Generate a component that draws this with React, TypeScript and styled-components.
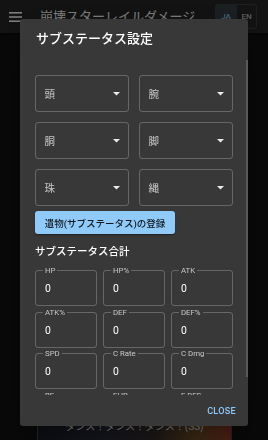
import React from "react";
import styled, { createGlobalStyle } from "styled-components";

const GlobalStyle = createGlobalStyle`
  html, body { margin: 0; padding: 0; background: #121212; }
  body {
    font-family: Roboto, "Noto Sans CJK JP", sans-serif;
    color: #fff;
    overflow: hidden;
  }
  * { box-sizing: border-box; }
`;

const Page = styled.div`
  width: 268px;
  height: 440px;
  overflow: hidden;
`;

const AppBar = styled.header`
  height: 33px;
  background: #272727;
  display: flex;
  align-items: center;
  padding: 0 11px 0 9px;
  box-shadow: 0 2px 4px rgba(0, 0, 0, 0.4);
`;

const MenuIcon = styled.svg`
  width: 13px;
  height: 10px;
  flex: none;
`;

const AppTitle = styled.div`
  flex: 1;
  margin-left: 18px;
  font-size: 13px;
  line-height: 20px;
  color: #fff;
  white-space: nowrap;
`;

const Toggle = styled.div`
  display: flex;
  height: 25px;
  border: 1px solid rgba(255, 255, 255, 0.12);
  border-radius: 3px;
  overflow: hidden;
`;

const ToggleBtn = styled.div<{ $selected?: boolean }>`
  width: 20px;
  display: flex;
  align-items: center;
  justify-content: center;
  font-size: 8px;
  font-weight: 500;
  color: ${(p) => (p.$selected ? "#90caf9" : "rgba(255,255,255,0.7)")};
  background: ${(p) => (p.$selected ? "rgba(144,202,249,0.16)" : "transparent")};
  & + & { border-left: 1px solid rgba(255, 255, 255, 0.12); }
`;

const Main = styled.main`
  padding: 0 36px 0 37px;
`;

const Card = styled.div`
  margin-top: 372px;
  height: 120px;
  border: 1px solid #4a4a4a;
  background: linear-gradient(90deg, #1b1e2a 0%, #2b2d3a 35%, #3a3030 60%, #7a5526 82%, #a0402a 100%);
  display: flex;
  justify-content: center;
  padding-top: 14px;
`;

const CardCaption = styled.div`
  font-size: 10px;
  line-height: 14px;
  color: #fff;
`;

const Backdrop = styled.div`
  position: fixed;
  inset: 0;
  background: rgba(0, 0, 0, 0.5);
  display: flex;
  justify-content: center;
  align-items: flex-start;
  padding-top: 19px;
`;

const Dialog = styled.div`
  width: 228px;
  height: 407px;
  background: #383838;
  border-radius: 3px;
  box-shadow: 0 11px 15px -7px rgba(0,0,0,0.2), 0 24px 38px 3px rgba(0,0,0,0.14), 0 9px 46px 8px rgba(0,0,0,0.12);
  display: flex;
  flex-direction: column;
  overflow: hidden;
`;

const DialogTitle = styled.h2`
  margin: 0;
  padding: 9px 16px 11px;
  font-size: 13px;
  line-height: 21px;
  font-weight: 500;
  color: #fff;
  flex: none;
`;

const ContentArea = styled.div`
  position: relative;
  flex: 1;
  min-height: 0;
`;

const DialogContent = styled.div`
  height: 100%;
  overflow-y: auto;
  padding: 15px 15px 10px 15px;
  scrollbar-width: none;
  &::-webkit-scrollbar { display: none; }
`;

const ScrollThumb = styled.div`
  position: absolute;
  top: 0;
  right: 0;
  width: 2.5px;
  height: 317px;
  background: #595959;
`;

const SelectGrid = styled.div`
  display: grid;
  grid-template-columns: 1fr 1fr;
  gap: 10px;
`;

const SelectBox = styled.div`
  height: 37px;
  border: 1px solid rgba(255, 255, 255, 0.23);
  border-radius: 3px;
  display: flex;
  align-items: center;
  justify-content: space-between;
  padding: 0 8px 0 8.5px;
`;

const SelectLabel = styled.span`
  font-size: 10.5px;
  color: rgba(255, 255, 255, 0.7);
`;

const Arrow = styled.svg`
  width: 7px;
  height: 4px;
  flex: none;
`;

const RegisterButton = styled.button`
  margin-top: 5px;
  width: 140px;
  height: 23px;
  border: none;
  border-radius: 3px;
  background: #90caf9;
  color: rgba(0, 0, 0, 0.87);
  font-family: inherit;
  font-size: 9.5px;
  font-weight: 500;
  padding: 0;
  box-shadow: 0 2px 1px -1px rgba(0,0,0,0.2), 0 1px 1px 0 rgba(0,0,0,0.14), 0 1px 3px 0 rgba(0,0,0,0.12);
`;

const SectionHeading = styled.h3`
  margin: 10px 0 6px;
  font-size: 10.5px;
  line-height: 16px;
  font-weight: 500;
  color: #fff;
`;

const FieldGrid = styled.div`
  display: grid;
  grid-template-columns: repeat(3, 1fr);
  column-gap: 6px;
  row-gap: 1.5px;
`;

const Field = styled.fieldset`
  margin: 0;
  min-width: 0;
  padding: 0 8px 0 7px;
  border: 1px solid rgba(255, 255, 255, 0.23);
  border-radius: 3px;
`;

const FieldLabel = styled.legend`
  padding: 0 2px;
  font-size: 7.8px;
  line-height: 9px;
  color: rgba(255, 255, 255, 0.7);
`;

const FieldValue = styled.div`
  height: 30px;
  padding: 0 0 3px 2px;
  display: flex;
  align-items: center;
  font-size: 10.4px;
  color: #fff;
`;

const DialogActions = styled.div`
  flex: none;
  height: 31px;
  display: flex;
  align-items: center;
  justify-content: flex-end;
  padding: 0 12px;
`;

const CloseButton = styled.span`
  font-size: 9.1px;
  font-weight: 500;
  letter-spacing: 0.03em;
  color: #90caf9;
  text-transform: uppercase;
`;

const slots = ["頭", "腕", "胴", "脚", "珠", "縄"];
const stats = ["HP", "HP%", "ATK", "ATK%", "DEF", "DEF%", "SPD", "C Rate", "C Dmg", "BE", "EHR", "E RES"];

export default function App() {
  return (
    <>
      <GlobalStyle />
      <Page>
        <AppBar>
          <MenuIcon viewBox="0 0 13 10">
            <rect x="0" y="0" width="13" height="1.6" fill="#fff" />
            <rect x="0" y="4.2" width="13" height="1.6" fill="#fff" />
            <rect x="0" y="8.4" width="13" height="1.6" fill="#fff" />
          </MenuIcon>
          <AppTitle>崩壊スターレイルダメージ</AppTitle>
          <Toggle>
            <ToggleBtn $selected>JA</ToggleBtn>
            <ToggleBtn>EN</ToggleBtn>
          </Toggle>
        </AppBar>
        <Main>
          <Card>
            <CardCaption>ダンス！ダンス！ダンス！(SS)</CardCaption>
          </Card>
        </Main>
      </Page>
      <Backdrop>
        <Dialog>
          <DialogTitle>サブステータス設定</DialogTitle>
          <ContentArea>
            <DialogContent>
              <SelectGrid>
                {slots.map((s) => (
                  <SelectBox key={s}>
                    <SelectLabel>{s}</SelectLabel>
                    <Arrow viewBox="0 0 7 4">
                      <path d="M0 0 L3.5 3.5 L7 0 Z" fill="rgba(255,255,255,0.9)" />
                    </Arrow>
                  </SelectBox>
                ))}
              </SelectGrid>
              <RegisterButton>遺物(サブステータス)の登録</RegisterButton>
              <SectionHeading>サブステータス合計</SectionHeading>
              <FieldGrid>
                {stats.map((s) => (
                  <Field key={s}>
                    <FieldLabel>{s}</FieldLabel>
                    <FieldValue>0</FieldValue>
                  </Field>
                ))}
              </FieldGrid>
            </DialogContent>
            <ScrollThumb />
          </ContentArea>
          <DialogActions>
            <CloseButton>Close</CloseButton>
          </DialogActions>
        </Dialog>
      </Backdrop>
    </>
  );
}
